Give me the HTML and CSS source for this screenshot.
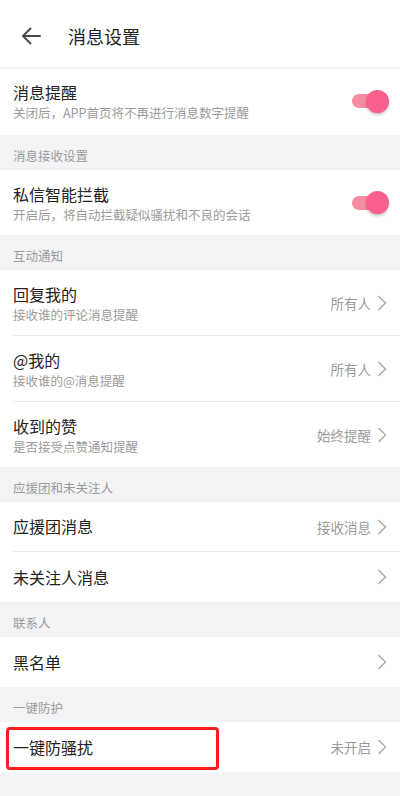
FILE: index.html
```html
<!DOCTYPE html>
<html lang="zh-CN">
<head>
<meta charset="utf-8">
<title>消息设置</title>
<link rel="stylesheet" href="styles.css">
</head>
<body>
<div class="page">
  <header class="header">
    <svg class="back" width="20" height="18" viewBox="0 0 20 18"><path d="M19 9H2.5M9.5 1.5L2 9l7.5 7.5" fill="none" stroke="#4a4a4a" stroke-width="2" stroke-linecap="round" stroke-linejoin="round"/></svg>
    <div class="htitle">消息设置</div>
  </header>

  <div class="row two first">
    <div class="texts"><div class="t">消息提醒</div><div class="s">关闭后，APP首页将不再进行消息数字提醒</div></div>
    <div class="toggle"><span class="track"></span><span class="knob"></span></div>
  </div>

  <div class="sec">消息接收设置</div>
  <div class="row two">
    <div class="texts"><div class="t">私信智能拦截</div><div class="s">开启后，将自动拦截疑似骚扰和不良的会话</div></div>
    <div class="toggle"><span class="track"></span><span class="knob"></span></div>
  </div>

  <div class="sec">互动通知</div>
  <div class="row two div">
    <div class="texts"><div class="t">回复我的</div><div class="s">接收谁的评论消息提醒</div></div>
    <div class="val">所有人</div><svg class="chev" width="10" height="16" viewBox="0 0 10 16"><path d="M1.5 1L8.5 8l-7 7" fill="none" stroke="#a8a8a8" stroke-width="1.4"/></svg>
  </div>
  <div class="row two div">
    <div class="texts"><div class="t">@我的</div><div class="s">接收谁的@消息提醒</div></div>
    <div class="val">所有人</div><svg class="chev" width="10" height="16" viewBox="0 0 10 16"><path d="M1.5 1L8.5 8l-7 7" fill="none" stroke="#a8a8a8" stroke-width="1.4"/></svg>
  </div>
  <div class="row two">
    <div class="texts"><div class="t">收到的赞</div><div class="s">是否接受点赞通知提醒</div></div>
    <div class="val">始终提醒</div><svg class="chev" width="10" height="16" viewBox="0 0 10 16"><path d="M1.5 1L8.5 8l-7 7" fill="none" stroke="#a8a8a8" stroke-width="1.4"/></svg>
  </div>

  <div class="sec">应援团和未关注人</div>
  <div class="row one div">
    <div class="texts"><div class="t">应援团消息</div></div>
    <div class="val">接收消息</div><svg class="chev" width="10" height="16" viewBox="0 0 10 16"><path d="M1.5 1L8.5 8l-7 7" fill="none" stroke="#a8a8a8" stroke-width="1.4"/></svg>
  </div>
  <div class="row one">
    <div class="texts"><div class="t">未关注人消息</div></div>
    <svg class="chev" width="10" height="16" viewBox="0 0 10 16"><path d="M1.5 1L8.5 8l-7 7" fill="none" stroke="#a8a8a8" stroke-width="1.4"/></svg>
  </div>

  <div class="sec">联系人</div>
  <div class="row one">
    <div class="texts"><div class="t">黑名单</div></div>
    <svg class="chev" width="10" height="16" viewBox="0 0 10 16"><path d="M1.5 1L8.5 8l-7 7" fill="none" stroke="#a8a8a8" stroke-width="1.4"/></svg>
  </div>

  <div class="sec">一键防护</div>
  <div class="row one mark">
    <div class="texts"><div class="t">一键防骚扰</div></div>
    <div class="val">未开启</div><svg class="chev" width="10" height="16" viewBox="0 0 10 16"><path d="M1.5 1L8.5 8l-7 7" fill="none" stroke="#a8a8a8" stroke-width="1.4"/></svg>
    <span class="redbox"></span>
  </div>
</div>
</body>
</html>
```

FILE: styles.css
```css
html, body {
  margin: 0;
  padding: 0;
  background: #f2f3f5;
}
body {
  font-family: "Noto Sans CJK SC", "Noto Sans", sans-serif;
  width: 400px;
  height: 796px;
  overflow: hidden;
}
.page {
  display: flex;
  flex-direction: column;
}
.header {
  height: 62px;
  padding-top: 5px;
  background: #fff;
  display: flex;
  align-items: center;
  position: relative;
  z-index: 2;
  box-shadow: 0 1px 4px rgba(0,0,0,0.07);
}
.back {
  margin-left: 21px;
  width: 20px;
  height: 18px;
}
.htitle {
  margin-left: 27px;
  font-size: 18px;
  color: #222;
  line-height: 24px;
}
.row {
  background: #fff;
  display: flex;
  align-items: center;
  padding-left: 13px;
  padding-right: 13px;
  position: relative;
  box-sizing: border-box;
}
.row.two { height: 65px; }
.row.two.first { height: 68px; }
.row.one { height: 50px; }
.row.div { border-bottom: 1px solid transparent; }
.row.div::after {
  content: "";
  position: absolute;
  left: 13px;
  right: 0;
  bottom: -1px;
  height: 1px;
  background: #ececec;
}
.row.two.div { height: 66px; }
.texts {
  flex: 1;
  display: flex;
  flex-direction: column;
}
.row.two .texts { padding-top: 1px; }
.t {
  font-size: 16px;
  line-height: 21px;
  color: #222;
}
.s {
  font-size: 12.5px;
  line-height: 16px;
  color: #9b9b9b;
  margin-top: 2px;
}
.val {
  font-size: 13.5px;
  color: #9b9b9b;
  margin-right: 6px;
}
.chev {
  display: block;
  width: 10px;
  height: 16px;
}
.toggle {
  position: relative;
  width: 37px;
  height: 23px;
  margin-right: -2px;
}
.track {
  position: absolute;
  left: 0;
  top: 4.5px;
  width: 32px;
  height: 14px;
  border-radius: 7px;
  background: #f48ca2;
}
.knob {
  position: absolute;
  right: 0;
  top: 0;
  width: 23px;
  height: 23px;
  border-radius: 50%;
  background: #fb5f8d;
  box-shadow: 0 2px 3px rgba(0,0,0,0.22);
}
.sec {
  height: 35px;
  box-sizing: border-box;
  padding-left: 13px;
  padding-bottom: 5px;
  display: flex;
  align-items: flex-end;
  font-size: 12.5px;
  line-height: 18px;
  color: #9b9b9b;
}
.redbox {
  position: absolute;
  left: 6px;
  top: 5px;
  width: 213px;
  height: 43px;
  box-sizing: border-box;
  border: 3px solid #ff1e1e;
  border-radius: 4px;
}
```
